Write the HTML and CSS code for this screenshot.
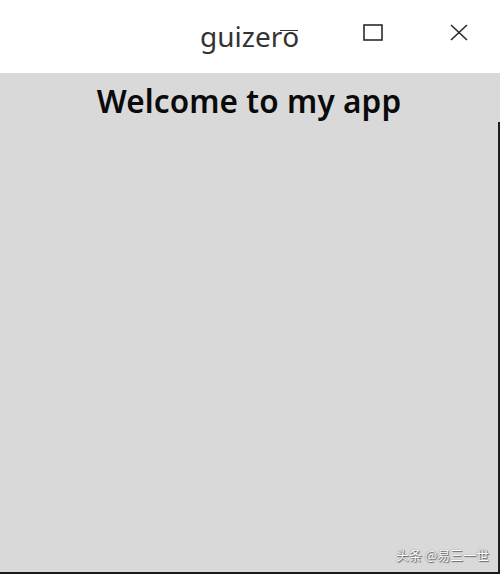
FILE: index.html
```html
<!DOCTYPE html>
<html>
<head>
<meta charset="utf-8">
<link rel="stylesheet" href="styles.css">
</head>
<body>
<div class="window">
  <header class="titlebar">
    <div class="title">guizer<span class="last">o</span></div>
    <div class="controls">
      <svg class="icon max" width="20" height="17" viewBox="0 0 20 17"><rect x="1" y="1" width="18" height="15" fill="none" stroke="#2b2b2b" stroke-width="1.6"/></svg>
      <svg class="icon close" width="18" height="17" viewBox="0 0 18 17"><path d="M1 1 L17 16 M17 1 L1 16" stroke="#2b2b2b" stroke-width="1.6" fill="none"/></svg>
    </div>
  </header>
  <main class="content">
    <h1 class="heading">Welcome to my app</h1>
    <div class="watermark">头条 @易三一世</div>
  </main>
</div>
</body>
</html>
```
FILE: styles.css
```css
html, body {
  margin: 0;
  padding: 0;
}
body {
  width: 500px;
  height: 574px;
  overflow: hidden;
  background: #d9d9d9;
}
.window {
  display: flex;
  flex-direction: column;
  height: 574px;
}
.titlebar {
  height: 73px;
  background: #ffffff;
  display: flex;
  align-items: center;
}
.title {
  margin-left: 200px;
  width: 99px;
  font-family: "Noto Sans", sans-serif;
  font-size: 28px;
  color: #333333;
  line-height: 1;
  margin-top: -2px;
  white-space: nowrap;
}
.last {
  position: relative;
}
.last::before {
  content: "";
  position: absolute;
  left: -2px;
  right: 1px;
  top: 13px;
  height: 1.5px;
  background: #333;
}
.controls {
  display: flex;
  align-items: center;
  margin-left: 64px;
  gap: 67px;
  margin-top: -9px;
}
.icon { display: block; }
.content {
  flex: 1;
  background: #d9d9d9;
  position: relative;
  border-bottom: 2px solid #1a1a1a;
  display: flex;
  flex-direction: column;
  align-items: center;
}
.content::after {
  content: "";
  position: absolute;
  right: 0;
  top: 49px;
  bottom: 0;
  width: 2px;
  background: #1f1f1f;
}
.heading {
  margin: 8px 0 0 -2px;
  font-family: "Noto Sans", sans-serif;
  font-weight: 600;
  font-size: 31.5px;
  letter-spacing: 0.1px;
  line-height: 40px;
  color: #0a0a0a;
}
.watermark {
  position: absolute;
  right: 11px;
  bottom: 8px;
  font-family: "Noto Sans CJK SC", sans-serif;
  font-size: 13px;
  color: #ffffff;
  text-shadow: 0 0 1px #555, 1px 1px 1px #666;
}
```
